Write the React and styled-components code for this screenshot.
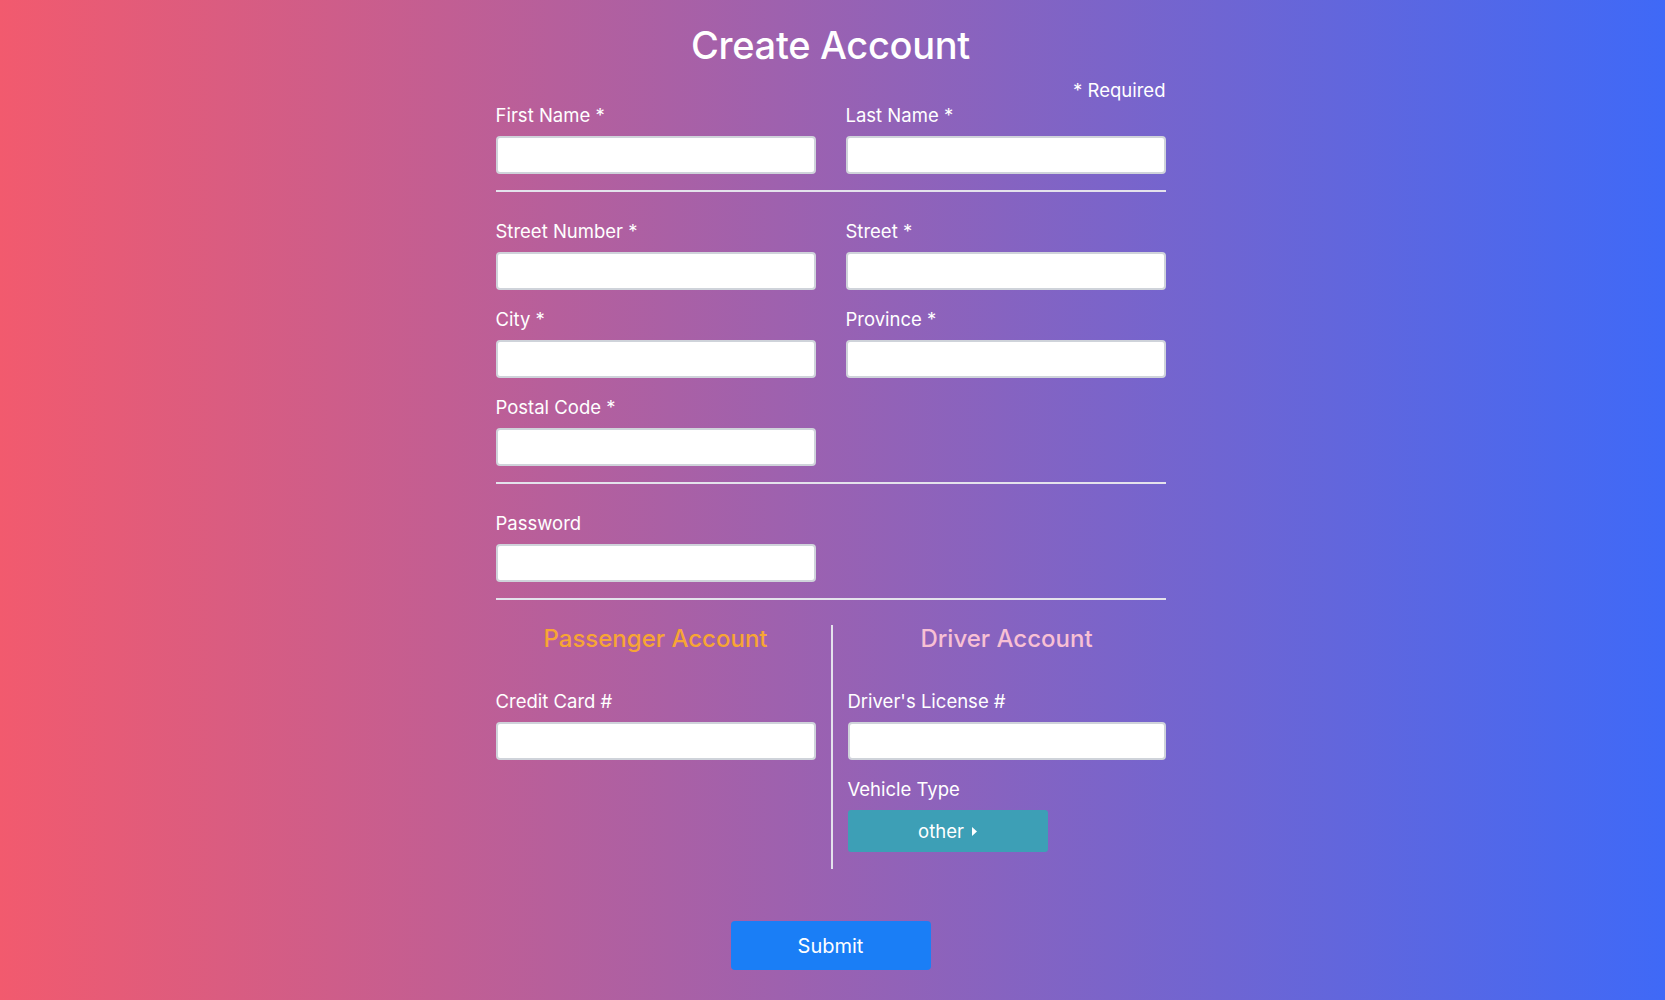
import React from 'react'
import styled, { createGlobalStyle } from 'styled-components'

const GlobalStyle = createGlobalStyle`
 * {
  box-sizing: border-box;
 }
 body {
  margin: 0;
  font-family: Inter, "Liberation Sans", Arial, sans-serif;
  color: #ffffff;
 }
`

const Page = styled.div`
 min-height: 100vh;
 padding: 21px 4px 31px 0;
 background: linear-gradient(to right, #f25a6e 0%, #3f69f7 100%);
`

const Title = styled.h1`
 margin: 0 0 10px;
 font-size: 38px;
 line-height: 48px;
 font-weight: 500;
 text-align: center;
 letter-spacing: -0.3px;
`

const Form = styled.form`
 width: 670px;
 margin: 0 auto;
`

const RequiredNote = styled.div`
 font-size: 18.5px;
 line-height: 22px;
 text-align: right;
 margin-bottom: 3px;
`

const Row = styled.div`
 display: grid;
 grid-template-columns: 320px 320px;
 column-gap: 30px;
`

const Field = styled.div`
 margin-bottom: 18px;
`

const Label = styled.label`
 display: block;
 font-size: 18.5px;
 line-height: 22px;
 margin-bottom: 10px;
`

const Input = styled.input`
 display: block;
 width: 100%;
 height: 38px;
 padding: 0 10px;
 font-size: 16px;
 background: #ffffff;
 border: 2px solid #cfd3da;
 border-radius: 4px;
 outline: none;
`

const Divider = styled.hr`
 height: 2px;
 margin: -2px 0 28px;
 border: none;
 background: #e4e2ec;
`

const AccountSection = styled.div`
 display: grid;
 grid-template-columns: 335px 1fr;
 margin-top: -3px;
`

const AccountColumn = styled.div`
 padding: 0 ${(p) => (p.$divided ? '0' : '15px')} 0 ${(p) => (p.$divided ? '15px' : '0')};
 border-left: ${(p) => (p.$divided ? '2px solid #e4e2ec' : 'none')};

 ${Field}:last-child {
  margin-bottom: 17px;
 }
`

const AccountHeading = styled.h3`
 margin: 0 0 37px;
 font-size: 24px;
 line-height: 28px;
 font-weight: 500;
 text-align: center;
 color: ${(p) => p.$color};
`

const VehicleButton = styled.button`
 display: flex;
 align-items: center;
 justify-content: center;
 gap: 8px;
 width: 200px;
 height: 42px;
 padding: 0;
 border: none;
 border-radius: 3px;
 background: #3d9fb6;
 color: #ffffff;
 font-family: inherit;
 font-size: 18.5px;
 cursor: pointer;
`

const SubmitRow = styled.div`
 display: flex;
 justify-content: center;
 margin-top: 52px;
`

const SubmitButton = styled.button`
 width: 200px;
 height: 49px;
 border: none;
 border-radius: 4px;
 background: #1a7ef6;
 color: #ffffff;
 font-family: inherit;
 font-size: 20px;
 cursor: pointer;
`

function TextField({ label }) {
 return (
  <Field>
   <Label>{label}</Label>
   <Input type="text" />
  </Field>
 )
}

export default function App() {
 return (
  <Page>
   <GlobalStyle />
   <Title>Create Account</Title>
   <Form onSubmit={(e) => e.preventDefault()}>
    <RequiredNote>* Required</RequiredNote>
    <Row>
     <TextField label="First Name *" />
     <TextField label="Last Name *" />
    </Row>
    <Divider />
    <Row>
     <TextField label="Street Number *" />
     <TextField label="Street *" />
    </Row>
    <Row>
     <TextField label="City *" />
     <TextField label="Province *" />
    </Row>
    <Row>
     <TextField label="Postal Code *" />
    </Row>
    <Divider />
    <Row>
     <TextField label="Password" />
    </Row>
    <Divider />
    <AccountSection>
     <AccountColumn>
      <AccountHeading $color="#f7a534">Passenger Account</AccountHeading>
      <TextField label="Credit Card #" />
     </AccountColumn>
     <AccountColumn $divided>
      <AccountHeading $color="#f8c0d4">Driver Account</AccountHeading>
      <TextField label="Driver's License #" />
      <Field>
       <Label>Vehicle Type</Label>
       <VehicleButton type="button">
        other
        <svg width="5" height="9" viewBox="0 0 5 9">
         <path d="M0 0 L5 4.5 L0 9 Z" fill="#ffffff" />
        </svg>
       </VehicleButton>
      </Field>
     </AccountColumn>
    </AccountSection>
    <SubmitRow>
     <SubmitButton type="submit">Submit</SubmitButton>
    </SubmitRow>
   </Form>
  </Page>
 )
}
